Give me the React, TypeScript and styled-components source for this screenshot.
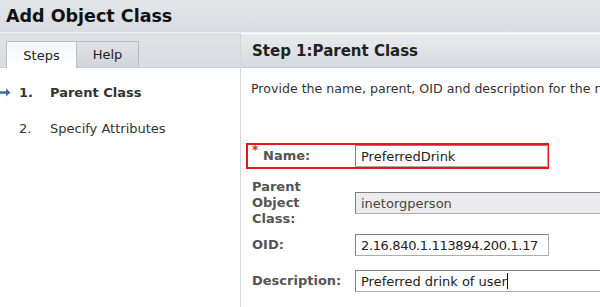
import styled, { createGlobalStyle } from 'styled-components'

const GlobalStyle = createGlobalStyle`
	body {
		margin: 0;
		background: #ffffff;
		font-family: 'DejaVu Sans', 'Liberation Sans', sans-serif;
	}
`

const Page = styled.div`
	width: 600px;
	height: 307px;
	overflow: hidden;
	display: flex;
	flex-direction: column;
	background: #ffffff;
`

const TitleBar = styled.div`
	height: 33px;
	flex-shrink: 0;
	display: flex;
	align-items: center;
	padding: 0 0 1px 6px;
	box-sizing: border-box;
	background: linear-gradient(#e3e6e9, #d8dce0);
	border-bottom: 1px solid #eef0f2;
	font-size: 17.5px;
	font-weight: bold;
	color: #111;
`

const Body = styled.div`
	flex: 1;
	display: flex;
`

const LeftPanel = styled.div`
	width: 240px;
	flex-shrink: 0;
	border-right: 1px solid #d4d7da;
	display: flex;
	flex-direction: column;
`

const TabStrip = styled.div`
	height: 34px;
	display: flex;
	align-items: flex-end;
	padding-left: 6px;
	background: linear-gradient(#dfe2e5, #d9dde1);
	border-bottom: 1px solid #c9cdd1;
`

const Tab = styled.div<{ active?: boolean }>`
	width: ${({ active }) => (active ? '69px' : '61px')};
	height: 25px;
	display: flex;
	align-items: center;
	justify-content: center;
	font-size: 13px;
	color: #222;
	border: 1px solid #b9bdc2;
	border-bottom: none;
	margin-right: -1px;
	background: ${({ active }) =>
		active ? 'linear-gradient(#f4f6f7, #ffffff)' : 'linear-gradient(#dfe2e6, #d1d5da)'};
	${({ active }) => active && 'margin-bottom: -1px; height: 26px;'}
`

const StepList = styled.ol`
	list-style: none;
	margin: 0;
	padding: 6px 0 0 0;
`

const StepItem = styled.li<{ current?: boolean }>`
	height: 36px;
	display: flex;
	align-items: center;
	font-size: 13px;
	color: #333;
	font-weight: ${({ current }) => (current ? 'bold' : 'normal')};
`

const Marker = styled.span`
	width: 19px;
	display: flex;
	align-items: center;
`

const StepNum = styled.span`
	width: 31px;
`

const RightPanel = styled.div`
	flex: 1;
	display: flex;
	flex-direction: column;
`

const StepHeader = styled.div`
	height: 33px;
	margin-top: 1px;
	display: flex;
	align-items: center;
	padding-left: 11px;
	background: linear-gradient(#e9ecee, #d6dade);
	border-bottom: 1px solid #c9cdd1;
	font-size: 15px;
	font-weight: bold;
	color: #222;
`

const Content = styled.div`
	padding: 13px 0 0 5px;
	white-space: nowrap;
`

const Intro = styled.p`
	margin: 0 0 46px 5px;
	font-size: 12.6px;
	line-height: 16px;
	color: #333;
`

const FieldRow = styled.div<{ highlight?: boolean; gap: number }>`
	display: flex;
	align-items: center;
	width: ${({ highlight }) => (highlight ? '299px' : 'auto')};
	border: 2px solid ${({ highlight }) => (highlight ? '#e8141a' : 'transparent')};
	margin-bottom: ${({ gap }) => gap}px;
`

const Label = styled.div`
	width: 107px;
	flex-shrink: 0;
	padding-left: 4px;
	box-sizing: border-box;
	font-size: 13px;
	font-weight: bold;
	color: #555;
	line-height: 16px;
	display: flex;
`

const Required = styled.span`
	color: #d9252b;
	font-size: 12px;
	width: 11px;
	margin-top: -6px;
`

const Input = styled.div<{ disabled?: boolean; width?: number; tight?: boolean }>`
	width: ${({ width }) => (width ? `${width}px` : '300px')};
	height: 20px;
	flex-shrink: 0;
	box-sizing: content-box;
	display: flex;
	align-items: center;
	padding-left: 5px;
	font-size: 13px;
	letter-spacing: ${({ tight }) => (tight ? '-0.35px' : 'normal')};
	border: 1px solid #a9acb0;
	border-top-color: #7d8084;
	border-left-color: #7d8084;
	background: ${({ disabled }) => (disabled ? '#ececec' : '#ffffff')};
	color: ${({ disabled }) => (disabled ? '#444' : '#222')};
`

const Caret = styled.span`
	display: inline-block;
	width: 1px;
	height: 16px;
	background: #111;
`

const Arrow = () => (
	<svg width="11" height="9" viewBox="0 0 11 9">
		<path d="M0 3.2h6V0.5L10.5 4.5 6 8.5V5.8H0z" fill="#3e6f9e" />
	</svg>
)

export default function App() {
	return (
		<Page>
			<GlobalStyle />
			<TitleBar>Add Object Class</TitleBar>
			<Body>
				<LeftPanel>
					<TabStrip>
						<Tab active>Steps</Tab>
						<Tab>Help</Tab>
					</TabStrip>
					<StepList>
						<StepItem current>
							<Marker>
								<Arrow />
							</Marker>
							<StepNum>1.</StepNum>
							Parent Class
						</StepItem>
						<StepItem>
							<Marker />
							<StepNum>2.</StepNum>
							Specify Attributes
						</StepItem>
					</StepList>
				</LeftPanel>
				<RightPanel>
					<StepHeader>Step 1:Parent Class</StepHeader>
					<Content>
						<Intro>Provide the name, parent, OID and description for the new object class.</Intro>
						<FieldRow highlight gap={8}>
							<Label>
								<Required>*</Required>Name:
							</Label>
							<Input width={186}>PreferredDrink</Input>
						</FieldRow>
						<FieldRow gap={3}>
							<Label>
								Parent
								<br />
								Object
								<br />
								Class:
							</Label>
							<Input disabled>inetorgperson</Input>
						</FieldRow>
						<FieldRow gap={10}>
							<Label>OID:</Label>
							<Input width={187} tight>
								2.16.840.1.113894.200.1.17
							</Input>
						</FieldRow>
						<FieldRow gap={0}>
							<Label>Description:</Label>
							<Input>
								Preferred drink of user
								<Caret />
							</Input>
						</FieldRow>
					</Content>
				</RightPanel>
			</Body>
		</Page>
	)
}
